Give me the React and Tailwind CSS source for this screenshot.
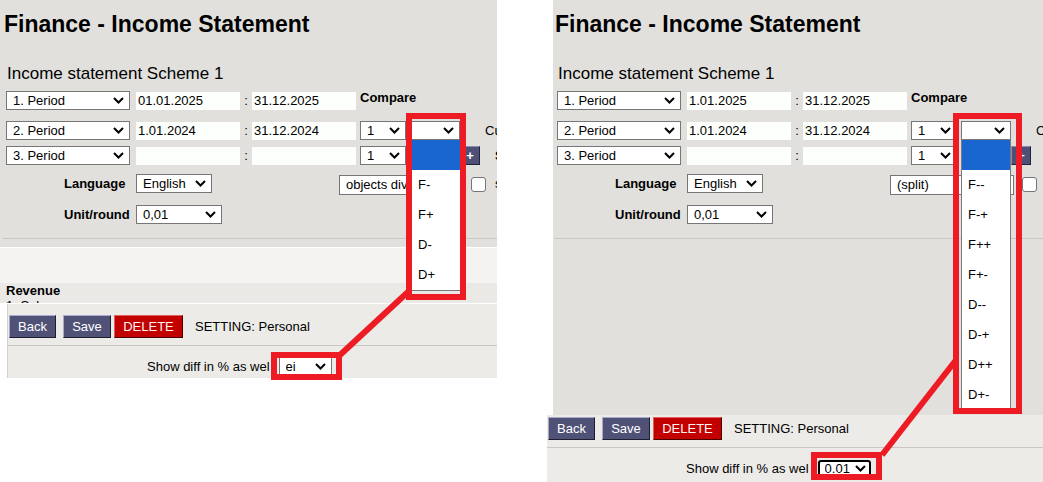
import React from "react";

// chevron used by every native-looking select
function Chevron() {
  return (
    <svg width="11" height="7" viewBox="0 0 11 7" className="shrink-0">
      <path d="M1 1l4.5 4.5L10 1" fill="none" stroke="#000" strokeWidth="2" />
    </svg>
  );
}

function Select({ value, w = "", focus = false }) {
  const box = focus
    ? "h-[18px] border-2 border-black rounded-[3px] pl-[5px] pr-[3px]"
    : "h-[19px] border border-[#767676] pl-[6px] pr-[5px]";
  return (
    <div className={`flex shrink-0 items-center justify-between bg-white text-[13px] ${box} ${w}`}>
      <span className="overflow-hidden whitespace-nowrap">{value}</span>
      <Chevron />
    </div>
  );
}

function Field({ value, w = "w-[104px]" }) {
  return (
    <div className={`h-[18px] shrink-0 bg-[#fcfffc] pl-[2px] text-[13px] leading-[18px] ${w}`}>
      {value}
    </div>
  );
}

function PeriodRow({ label, from, to, className, children }) {
  return (
    <div className={`flex h-[19px] shrink-0 items-center whitespace-nowrap ${className}`}>
      <Select value={label} w="w-[124px]" />
      <div className="ml-[6px]">
        <Field value={from} />
      </div>
      <span className="w-[12px] shrink-0 text-center text-[13px]">:</span>
      <Field value={to} />
      {children}
    </div>
  );
}

// open option list of the compare select
function Options({ items, className }) {
  return (
    <div className={`absolute top-[139px] w-[50px] border border-[#7a7a7a] bg-white ${className}`}>
      <div className="h-[30px] bg-[#1a66d1]" />
      {items.map((i) => (
        <div key={i} className="h-[30px] pl-[6px] text-[13px] leading-[30px]">
          {i}
        </div>
      ))}
    </div>
  );
}

function Form({ first, split }) {
  return (
    <>
      <div className="-ml-[2px] shrink-0 pt-[11px] text-[23px] font-bold leading-[26px] whitespace-nowrap">
        Finance - Income Statement
      </div>
      <div className="ml-[1px] mt-[27px] shrink-0 text-[17px] leading-[20px] whitespace-nowrap">
        Income statement Scheme 1
      </div>
      <PeriodRow className="mt-[7px]" label="1. Period" from={first} to="31.12.2025">
        <span className="ml-[4px] -mt-[5px] text-[13px] font-bold">Compare</span>
      </PeriodRow>
      <PeriodRow className="mt-[11px]" label="2. Period" from="1.01.2024" to="31.12.2024">
        <div className="ml-[4px]">
          <Select value="1" w="w-[46px]" />
        </div>
        <div className="ml-[4px]">
          <Select value="" w="w-[50px]" />
        </div>
        <span className="ml-[25px] text-[13px]">Currency</span>
      </PeriodRow>
      <PeriodRow className="mt-[6px]" label="3. Period" from="" to="">
        <div className="ml-[4px]">
          <Select value="1" w="w-[46px]" />
        </div>
        <div className="ml-[4px]">
          <Select value="" w="w-[50px]" />
        </div>
        <div className="flex h-[19px] w-[20px] shrink-0 items-center justify-center border border-[#8c8cb0] border-b-[#22223a] border-r-[#22223a] bg-[#4f5078] text-[13px] font-bold text-white">
          +
        </div>
        <span className="ml-[15px] text-[13px] font-bold">Show</span>
      </PeriodRow>
      <div className="mt-[9px] flex h-[19px] shrink-0 items-center whitespace-nowrap">
        <span className="ml-[58px] w-[72px] shrink-0 text-[13px] font-bold">Language</span>
        <Select value="English" w="w-[76px]" />
        <div className="ml-[127px] mt-[3px]">
          <div className="flex h-[20px] w-[124px] items-center border border-[#767676] bg-white pl-[6px] text-[13px]">
            {split}
          </div>
        </div>
        <div className="ml-[8px] mt-[1px] h-[15px] w-[15px] shrink-0 rounded-[3px] border border-[#767676] bg-white" />
        <span className="ml-[9px] text-[13px]">show</span>
      </div>
      <div className="mt-[12px] flex h-[19px] shrink-0 items-center whitespace-nowrap">
        <span className="ml-[58px] w-[72px] shrink-0 text-[13px] font-bold">Unit/round</span>
        <Select value="0,01" w="w-[86px]" />
      </div>
      <div className="-ml-[3px] mt-[14px] h-[1px] shrink-0 bg-[#c9c7c3]" />
    </>
  );
}

function Btn({ children, w }) {
  return (
    <div
      className={`flex h-[23px] shrink-0 items-center justify-center border border-t-[#a9a9c9] border-l-[#a9a9c9] border-b-[#1e1e30] border-r-[#1e1e30] bg-[#4f5177] text-[13px] text-white ${w}`}
    >
      {children}
    </div>
  );
}

function Strip({ className, value, focus }) {
  return (
    <div className={`flex flex-col bg-[#ecebe8] ${className}`}>
      <div className="flex shrink-0 items-center pl-[1px] whitespace-nowrap">
        <Btn w="w-[47px]">Back</Btn>
        <div className="ml-[7px]">
          <Btn w="w-[48px]">Save</Btn>
        </div>
        <div className="ml-[3px] flex h-[23px] w-[69px] items-center justify-center border border-t-[#e06060] border-l-[#e06060] border-b-[#4a0000] border-r-[#4a0000] bg-[#c20000] text-[13px] text-[#fff4f4]">
          DELETE
        </div>
        <span className="ml-[12px] text-[13px]">SETTING: Personal</span>
      </div>
      <div className="mt-[7px] h-[1px] shrink-0 bg-[#c9c7c3]" />
      <div className="mt-[11px] flex shrink-0 items-center pl-[139px] whitespace-nowrap">
        <span className="text-[13px]">Show diff in % as wel</span>
        <div className="ml-[9px]">
          <Select value={value} w="w-[53px]" focus={focus} />
        </div>
      </div>
    </div>
  );
}

export default function App() {
  return (
    <div className="relative flex h-[482px] w-[1043px] overflow-hidden bg-white font-['Liberation_Sans',Arial,sans-serif] text-black">
      {/* left screenshot */}
      <div className="flex w-[497px] shrink-0 flex-col">
        <div className="relative flex h-[303px] shrink-0 flex-col overflow-hidden bg-[#e2e0dd] pl-[6px]">
          <Form first="01.01.2025" split="objects divided" />
          <div className="-ml-[6px] mt-[8px] h-[36px] shrink-0 border-t border-white bg-[#f4f3f1]" />
          <div className="-ml-[6px] h-[15px] shrink-0 bg-[#ebe9e6] pl-[6px] text-[13px] font-bold leading-[15px]">Revenue</div>
          <div className="-ml-[6px] h-[15px] shrink-0 bg-[#ebe9e6] pl-[6px] text-[13px] leading-[15px]">1. Sales</div>
          <Options items={["F-", "F+", "D-", "D+"]} className="left-[411px]" />
        </div>
        <Strip className="ml-[7px] mt-[1px] h-[74px] border-l border-[#d3d1cd] pt-[11px]" value="ei" />
      </div>

      {/* right screenshot */}
      <div className="ml-[50px] flex w-[496px] shrink-0 flex-col">
        <div className="relative ml-[6px] flex h-[415px] shrink-0 flex-col overflow-hidden bg-[#e2e0dd] pl-[4px]">
          <Form first="1.01.2025" split="(split)" />
          <Options
            items={["F--", "F-+", "F++", "F+-", "D--", "D-+", "D++", "D+-"]}
            className="left-[408px]"
          />
        </div>
        <Strip className="h-[67px] pt-[2px]" value="0.01" focus />
      </div>

      {/* red annotation marks */}
      <svg className="pointer-events-none absolute left-0 top-0" width="1043" height="482">
        <g fill="none" stroke="#ed1c24" strokeWidth="6">
          <rect x="409" y="116" width="54" height="181" />
          <rect x="274" y="355" width="65" height="22" />
          <line x1="340" y1="355" x2="409" y2="291" />
          <rect x="956" y="116" width="63" height="295" />
          <rect x="814" y="455" width="65" height="22" />
          <line x1="882" y1="455" x2="956" y2="360" />
        </g>
      </svg>
    </div>
  );
}
